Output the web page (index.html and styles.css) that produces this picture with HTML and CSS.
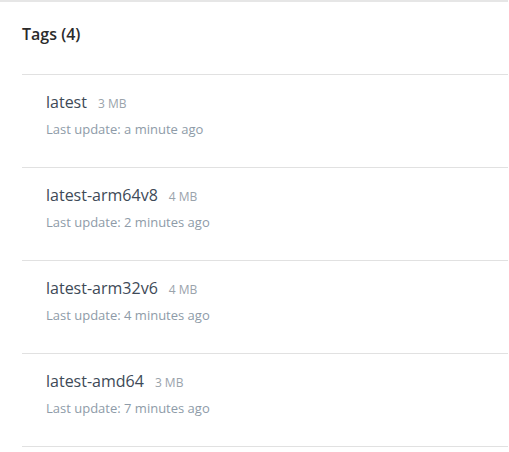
FILE: index.html
```html
<!DOCTYPE html>
<html>
<head>
<meta charset="utf-8">
<link rel="stylesheet" href="styles.css">
</head>
<body>
<section class="panel">
  <h2 class="title">Tags (4)</h2>
  <ul class="tags">
    <li class="tag">
      <div class="tag-head"><span class="tag-name">latest</span><span class="tag-size">3 MB</span></div>
      <div class="tag-meta">Last update: a minute ago</div>
    </li>
    <li class="tag">
      <div class="tag-head"><span class="tag-name">latest-arm64v8</span><span class="tag-size">4 MB</span></div>
      <div class="tag-meta">Last update: 2 minutes ago</div>
    </li>
    <li class="tag">
      <div class="tag-head"><span class="tag-name">latest-arm32v6</span><span class="tag-size">4 MB</span></div>
      <div class="tag-meta">Last update: 4 minutes ago</div>
    </li>
    <li class="tag">
      <div class="tag-head"><span class="tag-name">latest-amd64</span><span class="tag-size">3 MB</span></div>
      <div class="tag-meta">Last update: 7 minutes ago</div>
    </li>
  </ul>
</section>
</body>
</html>
```
FILE: styles.css
```css
html, body {
  margin: 0;
  padding: 0;
  background: #fff;
  font-family: "Open Sans", sans-serif;
}
.panel {
  border-top: 2px solid #e6e6e6;
  width: 508px;
}
.title {
  margin: 0;
  padding: 20px 0 28px 22px;
  font-size: 16px;
  line-height: 24px;
  font-weight: 600;
  color: #2b2b2b;
}
.tags {
  list-style: none;
  margin: 0 0 0 22px;
  padding: 0;
  border-top: 1px solid #e1e1e1;
}
.tag {
  padding: 15px 0 28px 24px;
  border-bottom: 1px solid #e1e1e1;
}
.tag-head {
  display: flex;
  align-items: baseline;
  gap: 11px;
  height: 24px;
  line-height: 24px;
}
.tag-name {
  font-size: 16px;
  color: #3e4a57;
}
.tag-size {
  font-size: 12px;
  line-height: 16px;
  color: #9aa3ab;
}
.tag-meta {
  margin-top: 5px;
  font-size: 13px;
  line-height: 20px;
  color: #8e9ba8;
}
```
